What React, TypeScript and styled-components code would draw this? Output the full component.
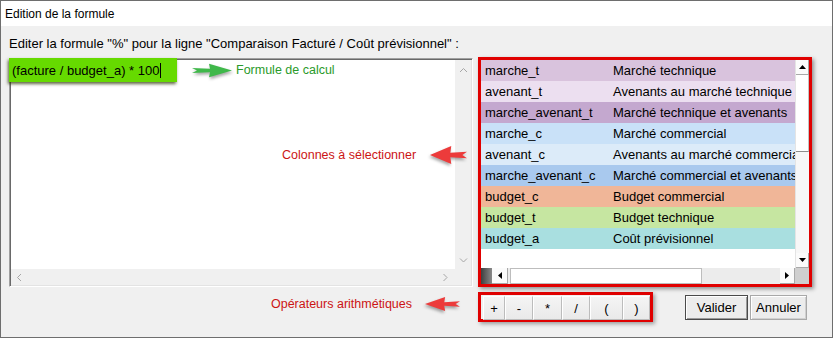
import styled, { createGlobalStyle } from "styled-components";

const GlobalStyle = createGlobalStyle`
  html, body {
    margin: 0;
    padding: 0;
    background: #ffffff;
    font-family: "Liberation Sans", Arial, sans-serif;
  }
  * { box-sizing: border-box; }
`;

interface IColumn {
    code: string;
    label: string;
    color: string;
}

const COLUMNS: IColumn[] = [
    { code: 'marche_t', label: 'Marché technique', color: '#d9c3dd' },
    { code: 'avenant_t', label: 'Avenants au marché technique', color: '#ecdff0' },
    { code: 'marche_avenant_t', label: 'Marché technique et avenants', color: '#c4a8cf' },
    { code: 'marche_c', label: 'Marché commercial', color: '#c9e1f8' },
    { code: 'avenant_c', label: 'Avenants au marché commercial', color: '#dcebf9' },
    { code: 'marche_avenant_c', label: 'Marché commercial et avenants', color: '#a9c9ee' },
    { code: 'budget_c', label: 'Budget commercial', color: '#f0b698' },
    { code: 'budget_t', label: 'Budget technique', color: '#c6e6a1' },
    { code: 'budget_a', label: 'Coût prévisionnel', color: '#a9dfe0' },
];

const OPERATORS: { sign: string; width: number }[] = [
    { sign: '+', width: 22 },
    { sign: '-', width: 28 },
    { sign: '*', width: 29 },
    { sign: '/', width: 28 },
    { sign: '(', width: 33 },
    { sign: ')', width: 27 },
];

const Window = styled.div`
  width: 833px;
  height: 338px;
  border: 1px solid #6e6e6e;
  background: #f0f0f0;
  display: flex;
  flex-direction: column;
`;

const TitleBar = styled.div`
  height: 25px;
  background: #ffffff;
  display: flex;
  align-items: center;
  padding-left: 4px;
  font-size: 12px;
  color: #000;
`;

const Body = styled.div`
  padding-left: 8px;
  display: flex;
  flex-direction: column;
`;

const Prompt = styled.div`
  margin-top: 10px;
  height: 15px;
  line-height: 15px;
  font-size: 13px;
  color: #000;
`;

const MainRow = styled.div`
  position: relative;
  margin-top: 6px;
  height: 230px;
  display: flex;
  gap: 5px;
`;

const Editor = styled.div`
  margin-top: 1px;
  width: 464px;
  height: 229px;
  padding: 1px;
  border: 1px solid;
  border-color: #a0a0a0 #ffffff #ffffff #a0a0a0;
  box-shadow: inset 1px 1px #696969, inset -1px -1px #e3e3e3;
  display: grid;
  grid-template-columns: 1fr 16px;
  grid-template-rows: 1fr 16px;
`;

const EditorContent = styled.div`
  background: #ffffff;
  display: flex;
  align-items: flex-start;
`;

const FormulaRow = styled.div`
  display: flex;
  align-items: center;
  margin: -2px 0 0 -2px;
`;

const FormulaBox = styled.div`
  width: 168px;
  height: 24px;
  background: #66da00;
  box-shadow: -1px 2px 3px rgba(40, 50, 0, 0.75);
  display: flex;
  align-items: center;
  padding-left: 3px;
  font-size: 13px;
  color: #000;
  white-space: nowrap;
`;

const Caret = styled.span`
  display: inline-block;
  width: 1px;
  height: 15px;
  margin-left: 1px;
  background: #000;
`;

const Gap = styled.span<{ $w: number }>`
  flex: none;
  width: ${(p) => p.$w}px;
`;

const Note = styled.span<{ $color: string }>`
  font-size: 12.5px;
  color: ${(p) => p.$color};
  white-space: nowrap;
`;

const Flat = styled.div<{ $dir: 'col' | 'row' }>`
  background: #f0f0f0;
  display: flex;
  flex-direction: ${(p) => (p.$dir === 'col' ? 'column' : 'row')};
  justify-content: space-between;
  align-items: center;
  padding: ${(p) => (p.$dir === 'col' ? '7px 0 5px' : '0 6px 0 5px')};
`;

const Corner = styled.div<{ $bg: string }>`
  background: ${(p) => p.$bg};
`;

const ColumnsNote = styled.div`
  position: absolute;
  left: 273px;
  top: 88px;
  display: flex;
  align-items: center;
  gap: 14px;
`;

const ListFrame = styled.div`
  width: 334px;
  height: 230px;
  border: 3px solid #e00000;
  box-shadow: 2px 2px 4px rgba(0, 0, 0, 0.4);
  background: #ffffff;
  display: grid;
  grid-template-columns: 1fr 14px;
  grid-template-rows: 1fr 16px;
`;

const ListRows = styled.div`
  overflow: hidden;
`;

const ListRow = styled.div<{ $bg: string }>`
  height: 21px;
  display: grid;
  grid-template-columns: 128px 1fr;
  align-items: center;
  background: ${(p) => p.$bg};
  font-size: 13px;
  color: #000;
  white-space: nowrap;
  overflow: hidden;
`;

const Cell = styled.span`
  padding-left: 4px;
  overflow: hidden;
`;

const VScroll = styled.div`
  background: #f7f7f7;
  border-left: 1px solid #e4e4e4;
  display: flex;
  flex-direction: column;
`;

const ScrollBtn = styled.div<{ $w: number; $h: number }>`
  width: ${(p) => p.$w}px;
  height: ${(p) => p.$h}px;
  flex: none;
  background: #fbfbfb;
  border-right: 1px solid #a9a9a9;
  border-bottom: 1px solid #a9a9a9;
  display: flex;
  align-items: center;
  justify-content: center;
`;

const VThumb = styled.div`
  height: 77px;
  background: #ffffff;
  border-bottom: 1px solid #8c8c8c;
  border-right: 1px solid #c4c4c4;
`;

const Spacer = styled.div`
  flex: 1;
`;

const HScroll = styled.div`
  background: #ececec;
  display: flex;
  align-items: stretch;
`;

const ResizeBlock = styled.div`
  width: 11px;
  background: linear-gradient(90deg, #3f3f3f, #8a8a8a);
`;

const HThumb = styled.div`
  width: 192px;
  margin-left: 2px;
  background: #ffffff;
  border: 1px solid #bdbdbd;
`;

const BottomRow = styled.div`
  margin-top: 5px;
  height: 30px;
  display: flex;
  align-items: center;
`;

const OperatorsNote = styled.div`
  width: 469px;
  padding: 0 18px 6px 0;
  display: flex;
  justify-content: flex-end;
  align-items: center;
  gap: 13px;
`;

const OpFrame = styled.div`
  width: 175px;
  height: 30px;
  border: 3px solid #e00000;
  box-shadow: 2px 2px 4px rgba(0, 0, 0, 0.35);
  padding: 1px 0 0 2px;
  display: flex;
`;

const OpButton = styled.button<{ $w: number }>`
  width: ${(p) => p.$w}px;
  height: 24px;
  padding: 0;
  margin: 0;
  border: 1px solid;
  border-color: #ffffff #bcbcbc #bcbcbc #ffffff;
  background: linear-gradient(#f4f4f4, #e9e9e9);
  font-family: "Liberation Sans", Arial, sans-serif;
  font-size: 13px;
  color: #000;
`;

const DialogButton = styled.button<{ $w: number; $default?: boolean }>`
  width: ${(p) => p.$w}px;
  height: 25px;
  margin-left: ${(p) => (p.$default ? 32 : 2)}px;
  padding: 0;
  border: 1px solid ${(p) => (p.$default ? '#4a4a4a' : '#a8a8a8')};
  box-shadow: inset 1px 1px #ffffff, inset -1px -1px ${(p) => (p.$default ? '#9a9a9a' : '#d0d0d0')};
  background: #ececec;
  font-family: "Liberation Sans", Arial, sans-serif;
  font-size: 13px;
  color: #000;
`;

function Chevron({ dir }: { dir: 'up' | 'down' | 'left' | 'right' }) {
    const pts = {
        up: '1,5 4.5,1.5 8,5',
        down: '1,1.5 4.5,5 8,1.5',
        left: '5,1 1.5,4.5 5,8',
        right: '1.5,1 5,4.5 1.5,8',
    }[dir];
    const vertical = dir === 'up' || dir === 'down';
    return (
        <svg width={vertical ? 9 : 7} height={vertical ? 7 : 9} viewBox={vertical ? '0 0 9 7' : '0 0 7 9'}>
            <polyline points={pts} fill="none" stroke="#a6a6a6" strokeWidth="1" />
        </svg>
    );
}

function Triangle({ dir }: { dir: 'up' | 'down' | 'left' | 'right' }) {
    const pts = {
        up: '0,4 3.5,0 7,4',
        down: '0,0 3.5,4 7,0',
        left: '4,0 0,3.5 4,7',
        right: '0,0 4,3.5 0,7',
    }[dir];
    const vertical = dir === 'up' || dir === 'down';
    return (
        <svg width={vertical ? 7 : 4} height={vertical ? 4 : 7} viewBox={vertical ? '0 0 7 4' : '0 0 4 7'}>
            <polygon points={pts} fill="#000" />
        </svg>
    );
}

const ArrowSvg = styled.svg<{ $flip?: boolean }>`
  flex: none;
  transform: ${(p) => (p.$flip ? 'scaleX(-1)' : 'none')};
  filter: drop-shadow(1px 2px 1.5px rgba(0, 0, 0, 0.35));
`;

function Arrow({ color, width, height, flip }: { color: string; width: number; height: number; flip?: boolean }) {
    return (
        <ArrowSvg $flip={flip} width={width} height={height} viewBox="0 0 40 18" preserveAspectRatio="none">
            <polygon points="0,6 18,7 17,1 40,9 17,17 18,11 0,12 5,9" fill={color} />
        </ArrowSvg>
    );
}

export default function App() {
    return (
        <>
            <GlobalStyle />
            <Window>
                <TitleBar>Edition de la formule</TitleBar>
                <Body>
                    <Prompt>Editer la formule "%" pour la ligne "Comparaison Facturé / Coût prévisionnel" :</Prompt>
                    <MainRow>
                        <Editor>
                            <EditorContent>
                                <FormulaRow>
                                    <FormulaBox>
                                        (facture / budget_a) * 100<Caret />
                                    </FormulaBox>
                                    <Gap $w={15} />
                                    <Arrow color="#3fb84a" width={40} height={15} />
                                    <Gap $w={4} />
                                    <Note $color="#2a9a2a">Formule de calcul</Note>
                                </FormulaRow>
                            </EditorContent>
                            <Flat $dir="col">
                                <Chevron dir="up" />
                                <Chevron dir="down" />
                            </Flat>
                            <Flat $dir="row">
                                <Chevron dir="left" />
                                <Chevron dir="right" />
                            </Flat>
                            <Corner $bg="#f0f0f0" />
                        </Editor>

                        <ListFrame>
                            <ListRows>
                                {COLUMNS.map((col: IColumn) => (
                                    <ListRow key={col.code} $bg={col.color}>
                                        <Cell>{col.code}</Cell>
                                        <Cell>{col.label}</Cell>
                                    </ListRow>
                                ))}
                            </ListRows>
                            <VScroll>
                                <ScrollBtn $w={13} $h={15}><Triangle dir="up" /></ScrollBtn>
                                <VThumb />
                                <Spacer />
                                <ScrollBtn $w={13} $h={15}><Triangle dir="down" /></ScrollBtn>
                            </VScroll>
                            <HScroll>
                                <ResizeBlock />
                                <ScrollBtn $w={16} $h={16}><Triangle dir="left" /></ScrollBtn>
                                <HThumb />
                                <Spacer />
                                <ScrollBtn $w={15} $h={16}><Triangle dir="right" /></ScrollBtn>
                            </HScroll>
                            <Corner $bg="#cfcfcf" />
                        </ListFrame>

                        <ColumnsNote>
                            <Note $color="#cc1414">Colonnes à sélectionner</Note>
                            <Arrow color="#ec3b3b" width={37} height={20} flip />
                        </ColumnsNote>
                    </MainRow>

                    <BottomRow>
                        <OperatorsNote>
                            <Note $color="#cc1414">Opérateurs arithmétiques</Note>
                            <Arrow color="#ec3b3b" width={35} height={16} flip />
                        </OperatorsNote>
                        <OpFrame>
                            {OPERATORS.map((op) => (
                                <OpButton key={op.sign} $w={op.width}>{op.sign}</OpButton>
                            ))}
                        </OpFrame>
                        <DialogButton $w={63} $default>Valider</DialogButton>
                        <DialogButton $w={57}>Annuler</DialogButton>
                    </BottomRow>
                </Body>
            </Window>
        </>
    );
}
